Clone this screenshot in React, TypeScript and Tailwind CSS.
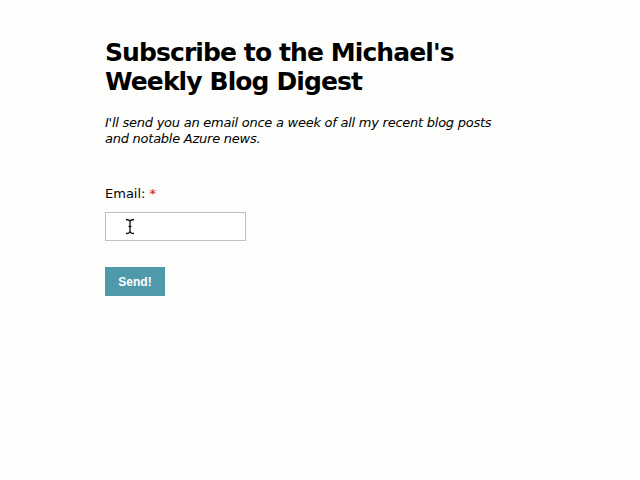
export default function App() {
  return (
    <main className="min-h-screen w-full bg-[#fdfdfb] text-black font-['DejaVu_Sans',sans-serif]">
      <div className="pl-[105px] pt-[38px] w-[540px]">
        <h1 className="text-[25px] font-bold leading-[29px] tracking-[-0.9px]">
          Subscribe to the Michael's Weekly Blog Digest
        </h1>
        <p className="mt-[19px] text-[13px] italic leading-[16px] tracking-[-0.25px] w-[400px]">
          I'll send you an email once a week of all my recent blog posts and notable Azure news.
        </p>
        <form className="mt-[39px]" onSubmit={(e) => e.preventDefault()}>
          <label className="block text-[13px] leading-[16px]">
            Email: <span className="text-[#c8102e]">*</span>
          </label>
          <div className="relative mt-[10px] w-[141px]">
            <input
              type="email"
              className="block h-[29px] w-[141px] border border-[#c0c0c0] bg-white px-2 text-[13px] outline-none"
            />
            {/* mouse cursor caught in the screenshot */}
            <svg
              className="pointer-events-none absolute left-[20px] top-[6px]"
              width="10"
              height="17"
              viewBox="0 0 10 17"
              fill="none"
              stroke="#111"
              strokeWidth="1.3"
            >
              <path d="M1 1.5 C3.5 1.5 5 2 5 4 C5 2 6.5 1.5 9 1.5" />
              <path d="M5 4 V13" />
              <path d="M1 15.5 C3.5 15.5 5 15 5 13 C5 15 6.5 15.5 9 15.5" />
              <path d="M3.5 8.5 H6.5" />
            </svg>
          </div>
          <button
            type="submit"
            className="mt-[26px] h-[29px] w-[60px] bg-[#4e9aab] text-[12px] font-bold text-white font-['Liberation_Sans',sans-serif]"
          >
            Send!
          </button>
        </form>
      </div>
    </main>
  );
}
